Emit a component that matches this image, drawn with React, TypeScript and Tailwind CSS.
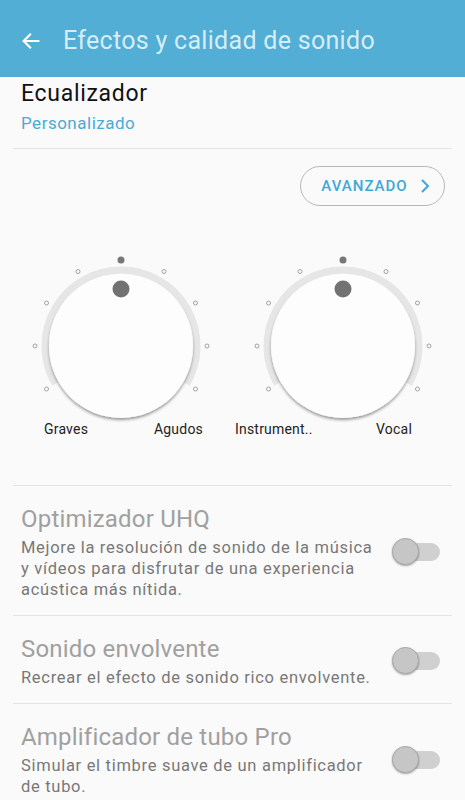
import React from 'react';

const FONT = { fontFamily: 'Roboto, "Noto Sans", sans-serif' };

function Knob() {
  const cx = 95;
  const cy = 96;
  const ticks = [-120, -90, -60, -30, 0, 30, 60, 90, 120];
  const pt = (deg: number, r: number) => {
    const a = (deg * Math.PI) / 180;
    return { x: cx + r * Math.sin(a), y: cy - r * Math.cos(a) };
  };
  const s = pt(-120, 76);
  const e = pt(120, 76);
  return (
    <svg width="190" height="169" viewBox="0 0 190 169" className="overflow-visible">
      <defs>
        <filter id="knobShadow" x="-20%" y="-20%" width="140%" height="140%">
          <feDropShadow dx="0" dy="2" stdDeviation="1.6" floodColor="#000" floodOpacity="0.4" />
        </filter>
      </defs>
      <path
        d={`M ${s.x} ${s.y} A 76 76 0 1 1 ${e.x} ${e.y}`}
        fill="none"
        stroke="#e6e6e6"
        strokeWidth="7"
      />
      <circle cx={cx} cy={cy} r="72" fill="#fdfdfd" filter="url(#knobShadow)" />
      <circle cx={cx} cy={cy - 57} r="8.5" fill="#727272" />
      {ticks.map((t) => {
        const p = pt(t, 86);
        return t === 0 ? (
          <circle key={t} cx={p.x} cy={p.y} r="3.5" fill="#777" />
        ) : (
          <circle key={t} cx={p.x} cy={p.y} r="2" fill="none" stroke="#a3a3a3" strokeWidth="1" />
        );
      })}
    </svg>
  );
}

function Toggle() {
  return (
    <div className="relative w-[48px] h-[30px] shrink-0">
      <div className="absolute right-0 top-[6px] w-[38px] h-[18px] rounded-full bg-[#d0d0d0]" />
      <div className="absolute left-0 top-[1px] w-[27px] h-[27px] rounded-full bg-[#c6c6c6] border border-[#a8a8a8] shadow-[0_1px_2px_rgba(0,0,0,0.35)]" />
    </div>
  );
}

function SettingItem({ title, desc, last }: { title: string; desc: string; last?: boolean }) {
  return (
    <div className="mx-[13px]">
      <div className={`flex items-center gap-[14px] pl-[8px] pr-[12px] pt-[18px] pb-[15px] ${last ? '' : 'border-b border-[#e4e4e4]'}`}>
        <div className="flex-1">
          <div className="text-[24px] leading-[30px] tracking-[0.2px] text-[#a0a0a0]">{title}</div>
          <div className="mt-[3px] text-[16.5px] leading-[21px] tracking-[0.7px] text-[#787878]">{desc}</div>
        </div>
        <Toggle />
      </div>
    </div>
  );
}

export default function App() {
  return (
    <div className="w-[465px] h-[800px] overflow-hidden bg-[#fafafa]" style={FONT}>
      {/* Header */}
      <div className="h-[77px] bg-[#52aed4] flex items-center pl-[20px]">
        <svg width="22" height="22" viewBox="0 0 24 24" className="mt-[4px]">
          <path d="M20 12H4.5M11 5l-7 7 7 7" fill="none" stroke="#fff" strokeWidth="2.4" strokeLinecap="square" />
        </svg>
        <div className="ml-[21px] mt-[4px] text-[25px] tracking-[0.3px] text-[#d6edf7]">Efectos y calidad de sonido</div>
      </div>

      {/* Equalizer heading */}
      <div className="mx-[13px] border-b border-[#e4e4e4] pl-[8px] pt-[3px] pb-[14px]">
        <div className="text-[23px] leading-[28px] tracking-[0.7px] text-[#111]">Ecualizador</div>
        <div className="mt-[4px] text-[17px] leading-[22px] tracking-[0.5px] text-[#4aabd6]">Personalizado</div>
      </div>

      {/* Advanced button */}
      <div className="flex justify-end pr-[20px] mt-[17px]">
        <button className="w-[145px] h-[40px] rounded-full border border-[#b8b8b8] flex items-center justify-center gap-[12px] pl-[6px]">
          <span className="text-[15px] font-medium tracking-[1px] text-[#3ea8d7]">AVANZADO</span>
          <svg width="10" height="16" viewBox="0 0 10 16">
            <path d="M2 2l6 6-6 6" fill="none" stroke="#3ea8d7" strokeWidth="2" />
          </svg>
        </button>
      </div>

      {/* Knobs */}
      <div className="flex pl-[26px] gap-[32px] mt-[44px]">
        <Knob />
        <Knob />
      </div>
      <div className="flex pl-[44px] text-[14px] leading-[20px] tracking-[0.2px] text-[#222]">
        <div className="w-[159px] flex justify-between">
          <span>Graves</span>
          <span>Agudos</span>
        </div>
        <div className="ml-[32px] w-[177px] flex justify-between">
          <span>Instrument..</span>
          <span>Vocal</span>
        </div>
      </div>

      <div className="mx-[13px] mt-[46px] border-b border-[#e4e4e4]" />

      <SettingItem
        title="Optimizador UHQ"
        desc="Mejore la resolución de sonido de la música y vídeos para disfrutar de una experiencia acústica más nítida."
      />
      <SettingItem title="Sonido envolvente" desc="Recrear el efecto de sonido rico envolvente." />
      <SettingItem
        title="Amplificador de tubo Pro"
        desc="Simular el timbre suave de un amplificador de tubo."
        last
      />
    </div>
  );
}
